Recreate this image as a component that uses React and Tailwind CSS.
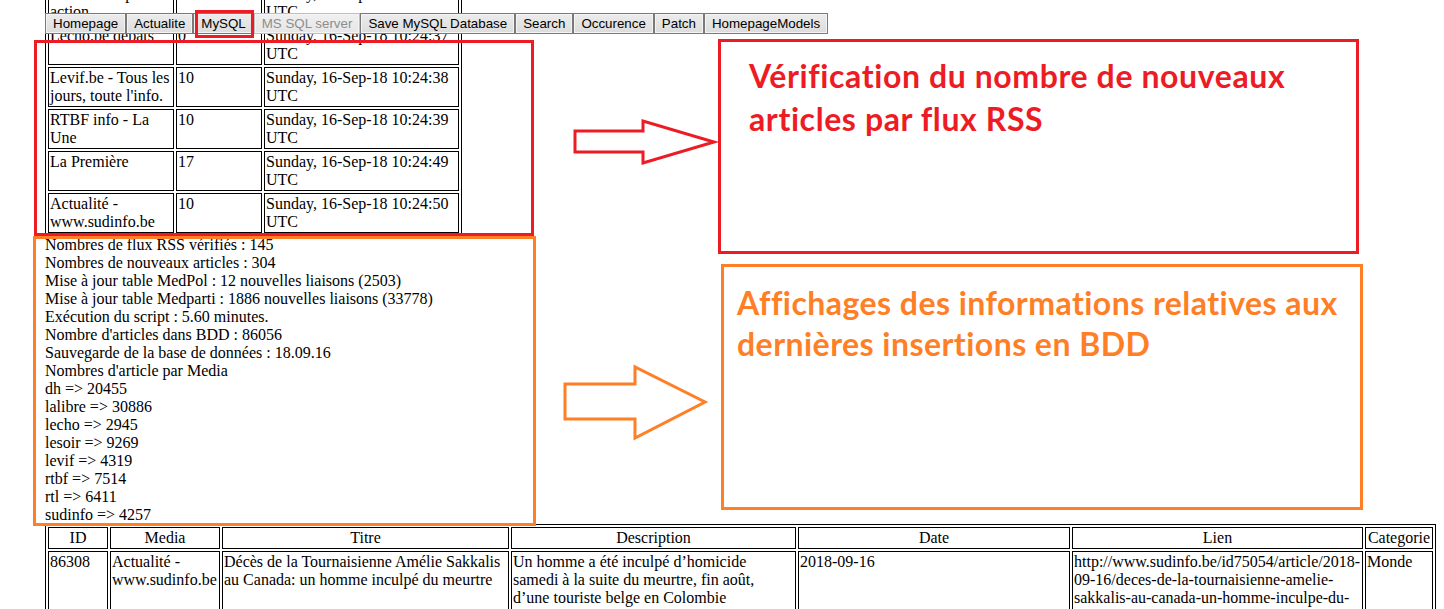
import React from 'react';

const NAV = ['Homepage', 'Actualite', 'MySQL', 'MS SQL server', 'Save MySQL Database', 'Search', 'Occurence', 'Patch', 'HomepageModels'];

const FEEDS = [
  { name: <>L'Echo - Top<br />action</>, count: '12', date: 'Sunday, 16-Sep-18 10:24:36 UTC' },
  { name: 'Lecho.be débats', count: '0', date: 'Sunday, 16-Sep-18 10:24:37 UTC' },
  { name: "Levif.be - Tous les jours, toute l'info.", count: '10', date: 'Sunday, 16-Sep-18 10:24:38 UTC' },
  { name: 'RTBF info - La Une', count: '10', date: 'Sunday, 16-Sep-18 10:24:39 UTC' },
  { name: 'La Première', count: '17', date: 'Sunday, 16-Sep-18 10:24:49 UTC' },
  { name: 'Actualité - www.sudinfo.be', count: '10', date: 'Sunday, 16-Sep-18 10:24:50 UTC' },
];

const STATS = [
  'Nombres de flux RSS vérifiés : 145',
  'Nombres de nouveaux articles : 304',
  'Mise à jour table MedPol : 12 nouvelles liaisons (2503)',
  'Mise à jour table Medparti : 1886 nouvelles liaisons (33778)',
  'Exécution du script : 5.60 minutes.',
  "Nombre d'articles dans BDD : 86056",
  'Sauvegarde de la base de données : 18.09.16',
  "Nombres d'article par Media",
  'dh => 20455',
  'lalibre => 30886',
  'lecho => 2945',
  'lesoir => 9269',
  'levif => 4319',
  'rtbf => 7514',
  'rtl => 6411',
  'sudinfo => 4257',
];

const COLS = [
  { label: 'ID', w: 'w-[60px]' },
  { label: 'Media', w: 'w-[110px]' },
  { label: 'Titre', w: 'w-[287px]' },
  { label: 'Description', w: 'w-[285px]' },
  { label: 'Date', w: 'w-[272px]' },
  { label: 'Lien', w: 'w-[291px]' },
  { label: 'Categorie', w: 'w-[68px]' },
];

const td = 'border border-black p-[1px] align-top';

function Arrow({ color, className, w, h, points }) {
  return (
    <svg className={`absolute ${className}`} width={w} height={h} viewBox={`0 0 ${w} ${h}`}>
      <polygon points={points} fill="none" stroke={color} strokeWidth="3" strokeLinejoin="miter" />
    </svg>
  );
}

export default function App() {
  return (
    <div className="relative w-full h-[609px] overflow-hidden bg-white text-black font-['Liberation_Serif','Times_New_Roman',serif] text-[16px] leading-[18px]">
      <div className="pl-[45px] -mt-[20px]">
        <table className="border border-black border-separate border-spacing-[2px] table-fixed w-[417px]">
          <tbody>
            {FEEDS.map((f, i) => (
              <tr key={i}>
                <td className={`${td} w-[126px] h-[40px]`}>{f.name}</td>
                <td className={`${td} w-[86px]`}>{f.count}</td>
                <td className={`${td} w-[195px]`}>{f.date}</td>
              </tr>
            ))}
          </tbody>
        </table>

        <div>
          {STATS.map((s) => <div key={s}>{s}</div>)}
        </div>

        <table className="border border-black border-separate border-spacing-[2px] table-fixed w-[1391px]">
          <thead>
            <tr>
              {COLS.map((c) => <td key={c.label} className={`border border-black p-[1px] text-center ${c.w}`}>{c.label}</td>)}
            </tr>
          </thead>
          <tbody>
            <tr>
              <td className={td}>86308</td>
              <td className={td}>Actualité - www.sudinfo.be</td>
              <td className={td}>Décès de la Tournaisienne Amélie Sakkalis au Canada: un homme inculpé du meurtre</td>
              <td className={td}>Un homme a été inculpé d’homicide<br />samedi à la suite du meurtre, fin août,<br />d’une touriste belge en Colombie</td>
              <td className={td}>2018-09-16</td>
              <td className={td}>http://www.sudinfo.be/id75054/article/2018-<br />09-16/deces-de-la-tournaisienne-amelie-<br />sakkalis-au-canada-un-homme-inculpe-du-<br />meurtre</td>
              <td className={td}>Monde</td>
            </tr>
          </tbody>
        </table>
      </div>

      <div className="absolute left-[45px] top-[13px] flex font-['Liberation_Sans',Arial,sans-serif] text-[13.33px] leading-[15px]">
        {NAV.map((n) => (
          <button
            key={n}
            disabled={n === 'MS SQL server'}
            className={`h-[21px] px-[7px] border shadow-[inset_0_0_0_1px_#f4f4f4] bg-linear-to-b ${n === 'MS SQL server' ? 'border-[#bfbfbf] from-[#f0f0f0] to-[#e6e6e6] text-[#8d8d8d]' : 'border-[#7a7a7a] from-[#ececec] to-[#dcdcdc] text-black'}`}
          >
            {n}
          </button>
        ))}
      </div>

      <div className="absolute left-[195px] top-[10px] w-[59px] h-[28px] border-[3px] border-[#ed1c24]" />
      <div className="absolute left-[34px] top-[40px] w-[500px] h-[196px] border-[3px] border-[#ed1c24]" />
      <div className="absolute left-[33px] top-[236px] w-[503px] h-[290px] border-[3px] border-[#ff7f27]" />

      <Arrow color="#ed1c24" className="left-[570px] top-[115px]" w={150} h={54} points="5,16 73,16 73,6 144,27 73,48 73,37 5,37" />
      <Arrow color="#ff7f27" className="left-[560px] top-[362px]" w={150} h={80} points="5,22 75,22 75,5 145,40 75,76 75,57 5,57" />

      <div className="absolute left-[718px] top-[39px] w-[641px] h-[215px] border-[3px] border-[#ed1c24] pl-[28px] pt-[12px] font-['Lato',sans-serif] font-bold text-[32px] leading-[43px] tracking-[0.6px] text-[#ed1c24]">
        Vérification du nombre de nouveaux<br />articles par flux RSS
      </div>
      <div className="absolute left-[721px] top-[264px] w-[642px] h-[246px] border-[3px] border-[#ff7f27] pl-[13px] pt-[15px] font-['Lato',sans-serif] font-bold text-[32px] leading-[41px] tracking-[0.45px] text-[#ff7f27]">
        Affichages des informations relatives aux<br />dernières insertions en BDD
      </div>
    </div>
  );
}
